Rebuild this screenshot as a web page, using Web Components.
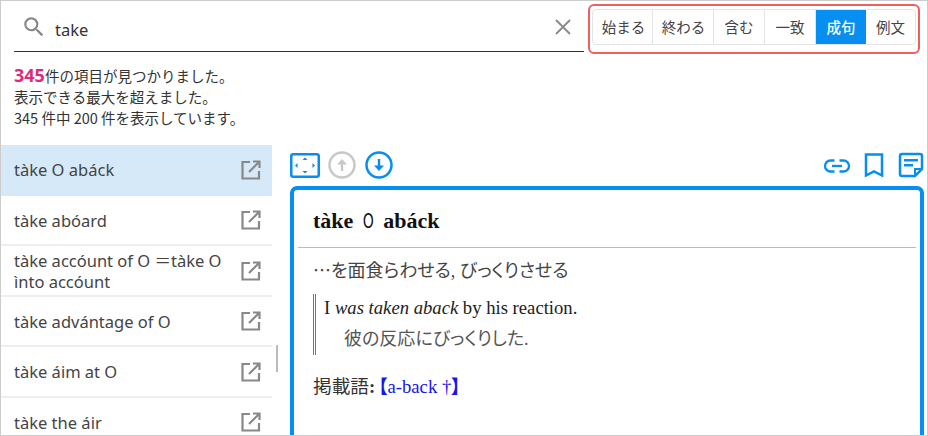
<!DOCTYPE html>
<html lang="ja"><head><meta charset="utf-8"><style>
html,body{margin:0;padding:0;background:#fff}
body{font-family:"Noto Sans","Noto Sans CJK JP",sans-serif;color:#333}
</style></head><body>
<dict-app></dict-app>
<template id="t-app"><style>
:host{display:flex;flex-direction:column;width:928px;height:436px;box-sizing:border-box;border:1px solid #ccc;overflow:hidden;background:#fff}
.top{display:flex;height:58px;flex:none}
.main{display:flex;flex:1;min-height:0}
.left{width:271px;flex:none;overflow:hidden}
.sb{width:18px;flex:none;display:flex;padding:200px 0 0 4px;box-sizing:border-box}
.sb i{display:block;width:2px;height:27px;background:#bbb}
.right{flex:1;min-width:0;padding-right:3px;display:flex;flex-direction:column}
</style>
<div class="top"><search-box></search-box><mode-tabs></mode-tabs></div>
<result-msg></result-msg>
<div class="main">
<div class="left">
<entry-item active>tàke O abáck</entry-item>
<entry-item>tàke abóard</entry-item>
<entry-item>tàke accóunt of O ＝tàke O ìnto accóunt</entry-item>
<entry-item>tàke advántage of O</entry-item>
<entry-item>tàke áim at O</entry-item>
<entry-item>tàke the áir</entry-item>
</div>
<div class="sb"><i></i></div>
<div class="right"><tool-bar></tool-bar><dict-entry></dict-entry></div>
</div></template>

<template id="t-search"><style>
:host{display:flex;align-items:center;box-sizing:border-box;width:570px;height:51px;margin:0 4px 0 13px;border-bottom:1.5px solid #333;padding:0 12px 0 7px}
svg{display:block;flex:none}
.q{flex:1;font:16.500px "Noto Sans","Noto Sans CJK JP",sans-serif;color:#333;margin-left:8px;padding-top:6px}
</style>
<svg width="26" height="26" viewBox="0 0 24 24" style="margin-top:1px"><path fill="#888" d="M15.5 14h-.79l-.28-.27A6.47 6.47 0 0 0 16 9.5 6.5 6.5 0 1 0 9.5 16c1.61 0 3.09-.59 4.23-1.57l.27.28v.79l5 4.99L20.49 19l-4.99-5zm-6 0C7.01 14 5 11.99 5 9.5S7.01 5 9.5 5 14 7.01 14 9.5 11.99 14 9.5 14z"/></svg>
<span class="q">take</span>
<svg width="18" height="18" viewBox="0 0 18 18" style="margin-top:2px"><path d="M2 2l14 14M16 2L2 16" stroke="#888" stroke-width="1.8" fill="none"/></svg>
</template>

<template id="t-tabs"><style>
:host{display:flex;box-sizing:border-box;width:332px;height:49.500px;margin-top:3px;border:2.500px solid #ee5f60;border-radius:6px;padding:2.500px 1.500px 0 2px;background:#fff}
.g{display:flex;width:324px;height:36px;box-sizing:border-box;border:1px solid #e4e4e4;border-radius:4px;overflow:hidden;font:14.500px "Noto Sans CJK JP","Noto Sans",sans-serif;color:#444}
b{font-weight:400;display:flex;align-items:center;justify-content:center;box-sizing:border-box;border-right:1px solid #e4e4e4}
b.on{background:#068ef0;color:#fff;font-weight:500;border-right:0}
b:last-child{border-right:0}
</style><div class="g"><b style="width:60px;padding-left:2px">始まる</b><b style="width:61px;padding-left:1px">終わる</b><b style="width:51px">含む</b><b style="width:51px">一致</b><b class="on" style="width:50px">成句</b><b style="flex:1">例文</b></div></template>

<template id="t-msg"><style>
:host{display:block;box-sizing:border-box;height:86px;padding:6px 0 0 13px;font:14.500px/21px "Noto Sans CJK JP","Noto Sans",sans-serif;color:#333;flex:none}
div{height:21px;white-space:nowrap}
em{font:700 18px/21px "Noto Sans","Noto Sans CJK JP",sans-serif;color:#e0297a}
</style><div><em>345</em>件の項目が見つかりました。</div><div>表示できる最大を超えました。</div><div>345 件中 200 件を表示しています。</div></template>

<template id="t-item"><style>
:host{display:flex;align-items:center;box-sizing:border-box;height:50.500px;padding:1px 10px 0 13px;border-bottom:2px solid #eee;font:16.500px/21px "Noto Sans","Noto Sans CJK JP",sans-serif;color:#444}
:host([active]){background:#d6e9f8;border-bottom-color:#d6e9f8}
.t{flex:1;min-width:0;padding-right:9px}
svg{display:block;flex:none}
</style><span class="t"><slot></slot></span>
<svg width="22" height="22" viewBox="0 0 22 22" fill="none" stroke="#888" stroke-width="2.200"><path d="M10 3H2.500v16.500h16.500V12"/><path d="M13 2.500h6.500V9M19 3L9 13"/></svg></template>

<template id="t-tools"><style>
:host{display:flex;align-items:center;height:41px;flex:none;box-sizing:border-box;padding:0 0 1px 0}
svg{display:block;flex:none}
.sp{flex:1}
</style>
<svg width="30" height="25" viewBox="0 0 30 25" style="margin-right:8px"><rect x="1.250" y="1.250" width="27.500" height="22.500" rx="2" fill="none" stroke="#068ef0" stroke-width="2.500"/><path fill="#068ef0" d="M15 4.500l2.500 2.500h-5zM15 20.500l-2.500-2.500h5zM5 12.500l2.500-2.500v5zM25 12.500l-2.500 2.500v-5z"/></svg>
<svg width="28" height="28" viewBox="0 0 28 28" style="margin-right:9px"><circle cx="14" cy="14" r="12.500" fill="none" stroke="#c8c8c8" stroke-width="2.500"/><path fill="none" stroke="#c8c8c8" stroke-width="2.400" d="M14 20v-8"/><path fill="#c8c8c8" d="M14 8l5 5.500h-10z"/></svg>
<svg width="28" height="28" viewBox="0 0 28 28"><circle cx="14" cy="14" r="12.500" fill="none" stroke="#068ef0" stroke-width="2.500"/><path fill="none" stroke="#068ef0" stroke-width="2.400" d="M14 8v8"/><path fill="#068ef0" d="M14 20l-5-5.500h10z"/></svg>
<span class="sp"></span>
<svg width="28" height="14" viewBox="0 0 28 14" fill="none" stroke="#068ef0" stroke-width="2.300" style="margin:2px 13px 0 0"><path d="M11.500 1.500H7.500a5.500 5.500 0 0 0 0 11h4M16.500 1.500h4a5.500 5.500 0 0 1 0 11h-4"/><path d="M9 7h10"/></svg>
<svg width="20" height="25" viewBox="0 0 20 25" fill="none" stroke="#068ef0" stroke-width="2.500" style="margin-right:14px"><path d="M2 1.500h16v21l-8-4-8 4z"/></svg>
<svg width="26" height="26" viewBox="0 0 26 26"><path fill="none" stroke="#068ef0" stroke-width="2.500" d="M4 2h18a2 2 0 0 1 2 2v13l-7 7H4a2 2 0 0 1-2-2V4a2 2 0 0 1 2-2z"/><path fill="#068ef0" d="M6 7h14v2.500H6zM6 12h9v2.500H6zM16 24v-8h8v2h-6v6z"/></svg>
</template>

<template id="t-entry"><style>
:host{display:block;flex:1;min-height:0;box-sizing:border-box;border:4px solid #068ef0;border-bottom:0;border-radius:7px 7px 0 0;padding:0 4px;font:18.670px "Liberation Serif","Noto Sans CJK JP",serif;color:#222;overflow:hidden;font-feature-settings:"palt"}
h1{margin:0;height:58px;box-sizing:border-box;padding:17px 0 0 15px;font:700 22px/26px "Liberation Serif","Noto Sans CJK JP",serif;color:#111;border-bottom:1px solid #bbb}
h1 span{display:inline-block;font-weight:400;font-family:"Noto Sans CJK JP",sans-serif;font-size:20px;line-height:26px;margin:0 2px;transform:scaleX(.75)}
.d{padding:6px 0 0 15px;line-height:30px;color:#444;font-size:18px}
.e{font-family:"Noto Sans CJK JP",sans-serif}
blockquote{margin:8px 0 0 15px;padding:0 0 0 8px;border-left:3px double #777;height:61px;box-sizing:border-box}
.en{height:30px;line-height:28px}
.jp{line-height:30px;padding-left:20px;color:#555;font-size:18px}
.s{margin:15px 0 0 15px;line-height:34px;color:#333}
a{color:#1616e8;text-decoration:none;margin-left:3px}
a b{font-weight:700}
</style><h1>tàke <span>O</span> abáck</h1>
<div class="d"><span class="e">…</span>を面食らわせる, びっくりさせる</div>
<blockquote><div class="en">I <i>was taken aback</i> by his reaction.</div><div class="jp">彼の反応にびっくりした.</div></blockquote>
<div class="s">掲載語<b>:</b><a><b>【</b>a-back †<b>】</b></a></div></template>

<script>
function def(name,id){customElements.define(name,class extends HTMLElement{constructor(){super();this.attachShadow({mode:'open'}).appendChild(document.getElementById(id).content.cloneNode(true))}})}
def('search-box','t-search');def('mode-tabs','t-tabs');def('result-msg','t-msg');def('entry-item','t-item');def('tool-bar','t-tools');def('dict-entry','t-entry');def('dict-app','t-app');
</script>
</body></html>
